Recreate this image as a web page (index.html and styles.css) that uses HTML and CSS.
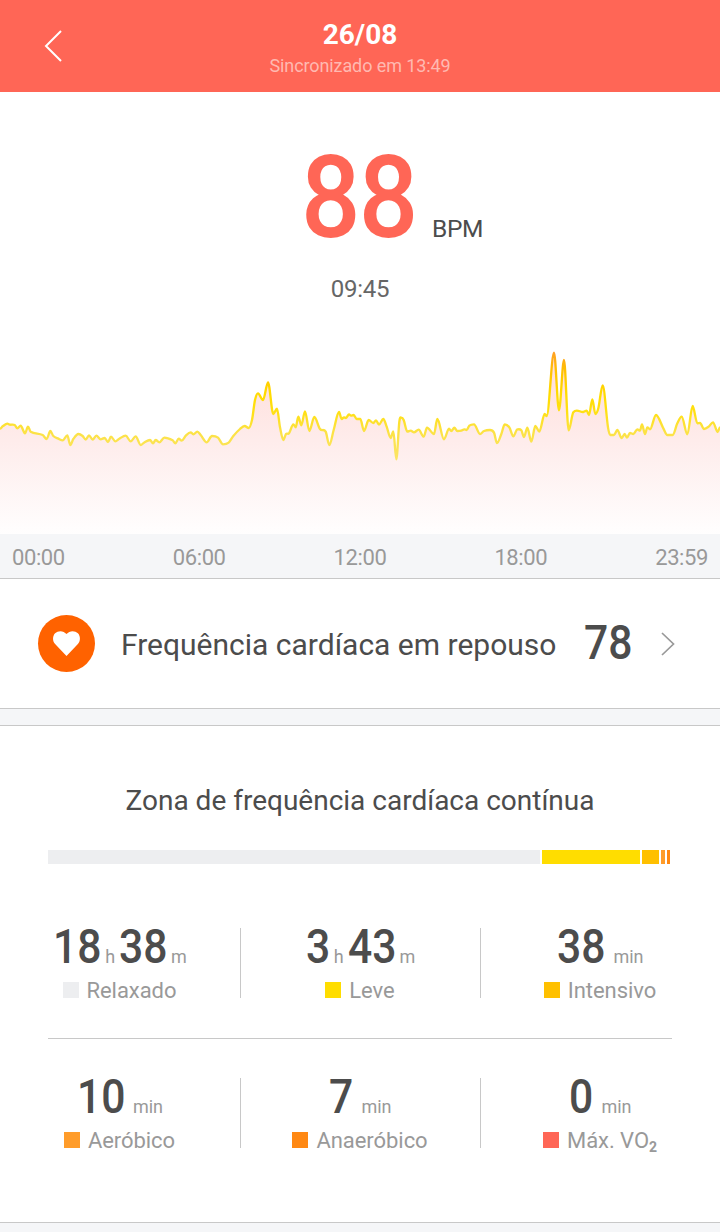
FILE: index.html
```html
<!DOCTYPE html>
<html lang="pt-BR">
<head>
    <meta charset="UTF-8">
    <meta name="viewport" content="width=device-width, initial-scale=1.0">
    <title>Frequência cardíaca</title>
    <link rel="stylesheet" href="styles.css">
</head>

<body>

    <!-- Header -->
    <header class="header">
        <svg class="back" width="20" height="34" viewBox="0 0 20 34">
            <path d="M18 2 L3 17 L18 32" fill="none" stroke="#fff" stroke-width="2"/>
        </svg>
        <div class="header-text">
            <h1>26/08</h1>
            <p>Sincronizado em 13:49</p>
        </div>
    </header>

    <!-- Current reading -->
    <section class="reading">
        <div class="bpm">
            <span class="bpm-value">88</span>
            <span class="bpm-unit">BPM</span>
        </div>
        <p class="reading-time">09:45</p>
    </section>

    <!-- Daily chart -->
    <svg class="chart" width="720" height="194" viewBox="0 0 2160 582">
        <defs>
            <linearGradient id="lineColor" gradientUnits="userSpaceOnUse" x1="0" y1="30" x2="0" y2="370">
                <stop offset="0" stop-color="#ff9c2a"/>
                <stop offset="0.18" stop-color="#ffc000"/>
                <stop offset="0.38" stop-color="#ffdb00"/>
                <stop offset="0.54" stop-color="#ffe012"/>
                <stop offset="0.72" stop-color="#fce244"/>
                <stop offset="1" stop-color="#fbe56a"/>
            </linearGradient>
            <linearGradient id="areaColor" gradientUnits="userSpaceOnUse" x1="0" y1="20" x2="0" y2="582">
                <stop offset="0" stop-color="#ffdad6"/>
                <stop offset="0.5" stop-color="#feeceb"/>
                <stop offset="1" stop-color="#fffefe"/>
            </linearGradient>
        </defs>
        <path id="area" fill="url(#areaColor)"/>
        <path id="line" fill="none" stroke="url(#lineColor)" stroke-width="7" stroke-linejoin="round"/>
    </svg>
    <div class="axis">
        <span>00:00</span>
        <span>06:00</span>
        <span>12:00</span>
        <span>18:00</span>
        <span>23:59</span>
    </div>

    <!-- Resting heart rate -->
    <section class="resting">
        <svg class="heart" width="58" height="58" viewBox="0 0 58 58">
            <circle cx="29.5" cy="28.5" r="28.5" fill="#ff6200"/>
            <path d="M29.5 41 L18.1 29.1 C15.3 26 15.5 21 18.1 18.3 C21.1 15.3 26.5 15.3 29.5 19.1 C32.5 15.3 37.9 15.3 40.9 18.3 C43.5 21 43.7 26 40.9 29.1 Z" fill="#fff"/>
        </svg>
        <span class="resting-label">Frequência cardíaca em repouso</span>
        <span class="num resting-value">78</span>
        <svg class="arrow" width="14" height="24" viewBox="0 0 14 24">
            <path d="M1 1 L12.5 12 L1 23" fill="none" stroke="#999" stroke-width="1.7"/>
        </svg>
    </section>

    <!-- Heart rate zones -->
    <section class="zones">
        <h2>Zona de frequência cardíaca contínua</h2>
        <div class="bar">
            <div class="relaxed" style="width: 492px"></div>
            <div class="light" style="width: 98px"></div>
            <div class="intensive" style="width: 17px"></div>
            <div class="aerobic" style="width: 4px"></div>
            <div class="anaerobic" style="width: 3px"></div>
        </div>

        <div class="stats">
            <div class="stat">
                <p class="stat-value"><span class="num">18</span><small>h</small><span class="num">38</span><small>m</small></p>
                <p class="stat-label"><i class="relaxed"></i>Relaxado</p>
            </div>
            <div class="stat">
                <p class="stat-value"><span class="num one">3</span><small>h</small><span class="num">43</span><small>m</small></p>
                <p class="stat-label"><i class="light"></i>Leve</p>
            </div>
            <div class="stat">
                <p class="stat-value wide"><span class="num">38</span><small>min</small></p>
                <p class="stat-label"><i class="intensive"></i>Intensivo</p>
            </div>
        </div>
        <div class="divider"></div>
        <div class="stats">
            <div class="stat">
                <p class="stat-value wide"><span class="num">10</span><small>min</small></p>
                <p class="stat-label"><i class="aerobic"></i>Aeróbico</p>
            </div>
            <div class="stat">
                <p class="stat-value wide"><span class="num one">7</span><small>min</small></p>
                <p class="stat-label"><i class="anaerobic"></i>Anaeróbico</p>
            </div>
            <div class="stat">
                <p class="stat-value wide"><span class="num one">0</span><small>min</small></p>
                <p class="stat-label"><i class="vo2"></i>Máx. VO<b>2</b></p>
            </div>
        </div>
    </section>

    <script src="script.js"></script>
</body>
</html>
```
FILE: styles.css
```css
/* General Styling */
* {
    box-sizing: border-box;
}

body {
    margin: 0;
    height: 1232px;
    overflow: hidden;
    background: #f5f6f8;
    font-family: Roboto, "Liberation Sans", sans-serif;
    color: #4c4c4c;
}

h1, h2, p {
    margin: 0;
    font-weight: 400;
}

svg {
    display: block;
    flex-shrink: 0;
}

/* Header */
.header {
    display: grid;
    grid-template-columns: 110px 1fr 110px;
    height: 92px;
    background: #ff6656;
    color: #fff;
}

.back {
    margin: 29px 0 0 43px;
}

.header-text {
    padding-top: 18px;
    text-align: center;
}

.header-text h1 {
    font-size: 28px;
    line-height: 34px;
    font-weight: 700;
}

.header-text p {
    margin-top: 3px;
    font-size: 18px;
    line-height: 22px;
    letter-spacing: -0.1px;
    color: #ffb9b1;
}

/* Current reading */
.reading {
    height: 248px;
    padding-top: 48px;
    background: #fff;
}

.bpm {
    display: flex;
    align-items: baseline;
    height: 116px;
    padding-left: 301px;
    line-height: 116px;
}

.bpm-value {
    width: 131px;
    font-size: 115px;
    font-weight: 500;
    letter-spacing: -2px;
    color: #ff6656;
    transform: scaleX(0.91);
    transform-origin: left;
}

.bpm-unit {
    padding-top: 1px;
    font-size: 24.5px;
    letter-spacing: -0.3px;
}

.reading-time {
    margin-top: 18px;
    font-size: 24px;
    line-height: 30px;
    letter-spacing: -0.3px;
    text-align: center;
    color: #666;
}

/* Chart */
.chart {
    background: #fff;
}

.axis {
    display: flex;
    justify-content: space-between;
    height: 45px;
    padding: 0 12px;
    border-bottom: 1px solid #c8c8c8;
    font-size: 22px;
    line-height: 47px;
    letter-spacing: -0.4px;
    color: #999;
}

/* Narrow digits */
.num {
    width: 48px;
    font-size: 49px;
    font-weight: 500;
    transform: scaleX(0.87);
    transform-origin: left;
}

.num.one {
    width: 24px;
}

/* Resting heart rate */
.resting {
    display: flex;
    align-items: center;
    height: 130px;
    padding-left: 37px;
    background: #fff;
    border-bottom: 1px solid #c8c8c8;
}

.resting-label {
    width: 463px;
    margin-left: 26px;
    padding-top: 2px;
    font-size: 30px;
    white-space: nowrap;
}

.resting-value {
    width: 77px;
    padding-bottom: 3px;
}

/* Zones */
.zones {
    height: 498px;
    margin-top: 16px;
    padding-top: 58px;
    background: #fff;
    border-top: 1px solid #c8c8c8;
    border-bottom: 1px solid #c8c8c8;
}

.zones h2 {
    font-size: 28px;
    line-height: 34px;
    text-align: center;
}

.bar {
    display: flex;
    gap: 2px;
    height: 14px;
    margin: 32px 48px 64px;
}

.relaxed { background: #edeef0; }
.light { background: #ffdd00; }
.intensive { background: #ffc000; }
.aerobic { background: #ff9c2a; }
.anaerobic { background: #ff8813; }
.vo2 { background: #ff6656; }

.stats {
    display: grid;
    grid-template: 70px / repeat(3, 240px);
}

.stat + .stat {
    border-left: 1px solid #c8c8c8;
}

.stat-value {
    display: flex;
    justify-content: center;
    align-items: baseline;
    height: 50px;
    padding-top: 1px;
    line-height: 36px;
}

.stat-value small {
    margin: 0 4px;
    font-size: 18px;
    color: #999;
}

.stat-value small:last-child {
    margin-right: 0;
}

.stat-value.wide small {
    margin: 0 0 0 8px;
}

.stat-label {
    display: flex;
    justify-content: center;
    align-items: center;
    padding-right: 1px;
    font-size: 22px;
    line-height: 26px;
    letter-spacing: -0.05px;
    color: #999;
}

.stat-label i {
    width: 16px;
    height: 16px;
    margin: -3px 8px 0 0;
}

.stat-label b {
    padding-top: 12px;
    font-size: 14px;
    line-height: 14px;
}

.divider {
    height: 1px;
    margin: 40px 48px 39px;
    background: #c8c8c8;
}
```
FILE: script.js
```js
// [x, y] samples of the day, in viewBox units
const points = [
    [0,266],[8,259],[22,251],[30,254],[44,255],[52,265],[62,257],[75,280],[84,260],[92,275],
    [128,285],[140,297],[151,273],[160,288],[175,296],[188,301],[202,286],[211,315],[220,297],
    [235,282],[248,288],[257,299],[267,286],[278,299],[289,287],[302,298],[314,294],[324,306],
    [333,290],[346,304],[358,296],[377,287],[392,304],[407,289],[422,315],[432,308],[450,300],
    [459,310],[467,300],[478,307],[493,293],[518,301],[526,310],[536,296],[545,302],[558,286],
    [572,277],[580,283],[592,275],[602,285],[620,307],[636,288],[654,293],[669,313],[686,308],
    [700,288],[720,267],
    [734,258],[746,264],[756,240],[765,180],[774,160],[789,180],[804,127],[820,222],[831,206],
    [840,262],[850,300],[858,282],[867,280],[880,253],[887,262],[895,230],[904,256],[915,214],
    [928,273],[943,231],[960,267],[977,275],[988,315],[1001,270],[1017,216],[1025,237],
    [1032,232],[1038,234],[1047,223],[1053,227],[1061,225],[1070,237],[1081,237],[1092,273],
    [1106,240],[1120,249],[1128,241],[1137,254],[1150,237],[1160,260],[1172,294],[1180,274],
    [1189,358],[1198,245],[1204,233],[1211,240],[1222,275],[1232,272],[1242,277],[1256,269],
    [1271,290],[1281,263],[1302,282],[1312,237],[1332,298],[1347,266],[1354,273],[1363,263],
    [1372,273],[1384,272],[1393,268],[1400,270],[1408,257],[1422,253],
    [1440,282],[1452,273],[1470,270],[1482,278],[1491,309],[1504,282],[1514,253],[1528,262],
    [1540,289],[1552,268],[1564,271],[1572,291],[1582,263],[1594,305],[1606,258],[1618,275],
    [1634,222],[1640,228],[1662,38],[1677,211],[1692,60],[1706,271],[1720,217],[1750,216],
    [1760,212],[1767,225],[1777,178],[1786,222],[1795,205],[1808,136],[1824,262],[1831,285],
    [1842,285],[1852,270],[1865,294],[1874,282],[1881,293],[1890,279],[1900,282],[1912,268],
    [1920,272],[1926,253],[1935,282],[1942,262],[1950,268],[1968,225],[1990,265],[2002,285],
    [2018,285],[2032,250],[2045,230],[2062,283],[2078,198],[2092,250],[2100,249],[2112,267],
    [2126,260],[2139,247],[2153,276],[2160,262]
];

// flat at peaks and valleys, average slope in between
function slope(i) {
    const a = points[i - 1], b = points[i], c = points[i + 1];
    if (!a || !c) return 0;
    if ((b[1] - a[1]) * (c[1] - b[1]) <= 0) return 0;
    return (c[1] - a[1]) / (c[0] - a[0]);
}

let d = `M${points[0]}`;
for (let i = 1; i < points.length; i++) {
    const [x0, y0] = points[i - 1];
    const [x1, y1] = points[i];
    const h = (x1 - x0) / 3;
    d += ` C${x0 + h},${y0 + slope(i - 1) * h} ${x1 - h},${y1 - slope(i) * h} ${x1},${y1}`;
}

document.getElementById("line").setAttribute("d", d);
document.getElementById("area").setAttribute("d", d + " V582 H0 Z");
```
